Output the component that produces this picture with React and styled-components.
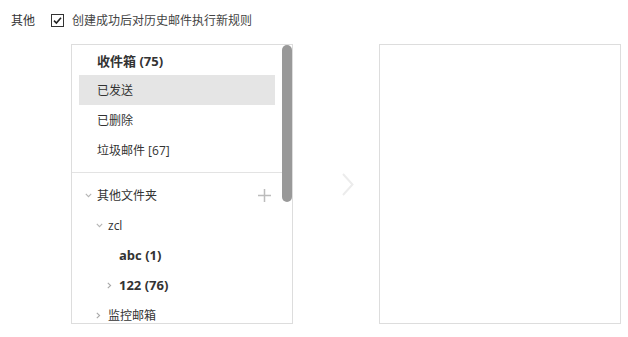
import React from "react";
import styled, { createGlobalStyle } from "styled-components";

const Global = createGlobalStyle`
  html, body { margin: 0; padding: 0; background: #fff; }
  body { font-family: "Open Sans", "Noto Sans CJK SC", sans-serif; color: #333; }
  * { box-sizing: border-box; }
`;

const Page = styled.div`
  width: 628px;
  height: 337px;
  padding-top: 10px;
  overflow: hidden;
`;

const OptionRow = styled.div`
  display: flex;
  align-items: center;
  height: 20px;
  padding-left: 11px;
  font-size: 12px;
`;

const Label = styled.span`
  width: 40px;
  color: #333;
`;

const CheckLabel = styled.label`
  display: flex;
  align-items: center;
  gap: 8px;
  color: #444;
`;

const Box = styled.span`
  width: 13px;
  height: 13px;
  border: 1px solid #333;
  display: inline-flex;
  align-items: center;
  justify-content: center;
  background: #fff;
`;

const Panels = styled.div`
  display: flex;
  margin-top: 14px;
  padding-left: 71px;
`;

const ListPanel = styled.div`
  position: relative;
  width: 222px;
  height: 280px;
  border: 1px solid #ddd;
  overflow: hidden;
  background: #fff;
`;

const Scrollbar = styled.div`
  position: absolute;
  right: 0;
  top: 0;
  width: 10px;
  height: 157px;
  border-radius: 5px;
  background: #999;
`;

const Row = styled.div`
  display: flex;
  align-items: center;
  height: 30px;
  margin: 0 17px 0 7px;
  padding-left: ${(p) => p.$pad}px;
  font-size: ${(p) => (p.$bold ? 13 : 12)}px;
  font-weight: ${(p) => (p.$bold ? 700 : 400)};
  color: #333;
  background: ${(p) => (p.$active ? "#e5e5e5" : "transparent")};
  white-space: nowrap;
`;

const Divider = styled.div`
  height: 1px;
  background: #e3e3e3;
  margin: 7px 10px 7px 0;
`;

const CaretSlot = styled.span`
  width: 12px;
  flex: none;
  display: inline-flex;
  align-items: center;
`;

const Grow = styled.span`
  flex: 1;
`;

const PlusBtn = styled.span`
  display: inline-flex;
  margin-right: 4px;
`;

const ArrowSlot = styled.div`
  width: 86px;
  display: flex;
  align-items: center;
  padding-left: 49px;
`;

const TargetPanel = styled.div`
  width: 242px;
  height: 280px;
  border: 1px solid #ddd;
  background: #fff;
`;

const Down = () => (
  <svg width="7" height="5" viewBox="0 0 7 5">
    <path d="M0.8 0.8 L3.5 3.6 L6.2 0.8" fill="none" stroke="#b5b5b5" strokeWidth="1.1" />
  </svg>
);

const Right = () => (
  <svg width="5" height="7" viewBox="0 0 5 7">
    <path d="M0.8 0.8 L3.6 3.5 L0.8 6.2" fill="none" stroke="#a8a8a8" strokeWidth="1.1" />
  </svg>
);

const Plus = () => (
  <svg width="13" height="13" viewBox="0 0 13 13">
    <path d="M6.5 0 V13 M0 6.5 H13" stroke="#bcbcbc" strokeWidth="1.5" />
  </svg>
);

const Check = () => (
  <svg width="11" height="11" viewBox="0 0 11 11">
    <path d="M2 5.6 L4.4 8 L9 2.8" fill="none" stroke="#222" strokeWidth="1.6" />
  </svg>
);

const BigArrow = () => (
  <svg width="12" height="23" viewBox="0 0 12 23">
    <path d="M1 1 L10.5 11.5 L1 22" fill="none" stroke="#ececec" strokeWidth="2" />
  </svg>
);

const base = [
  { label: "收件箱 (75)", bold: true },
  { label: "已发送", active: true },
  { label: "已删除" },
  { label: "垃圾邮件 [67]" },
];

const tree = [
  { label: "其他文件夹", level: 0, caret: "down", plus: true },
  { label: "zcl", level: 1, caret: "down" },
  { label: "abc (1)", level: 2, bold: true },
  { label: "122 (76)", level: 2, caret: "right", bold: true },
  { label: "监控邮箱", level: 1, caret: "right" },
];

export default function App() {
  return (
    <>
      <Global />
      <Page>
        <OptionRow>
          <Label>其他</Label>
          <CheckLabel>
            <Box>
              <Check />
            </Box>
            创建成功后对历史邮件执行新规则
          </CheckLabel>
        </OptionRow>
        <Panels>
          <ListPanel>
            {base.map((r) => (
              <Row key={r.label} $pad={18} $bold={r.bold} $active={r.active}>
                {r.label}
              </Row>
            ))}
            <Divider />
            {tree.map((r) => (
              <Row key={r.label} $pad={6 + r.level * 11} $bold={r.bold}>
                <CaretSlot>
                  {r.caret === "down" && <Down />}
                  {r.caret === "right" && <Right />}
                </CaretSlot>
                <Grow>{r.label}</Grow>
                {r.plus && (
                  <PlusBtn>
                    <Plus />
                  </PlusBtn>
                )}
              </Row>
            ))}
            <Scrollbar />
          </ListPanel>
          <ArrowSlot>
            <BigArrow />
          </ArrowSlot>
          <TargetPanel />
        </Panels>
      </Page>
    </>
  );
}
